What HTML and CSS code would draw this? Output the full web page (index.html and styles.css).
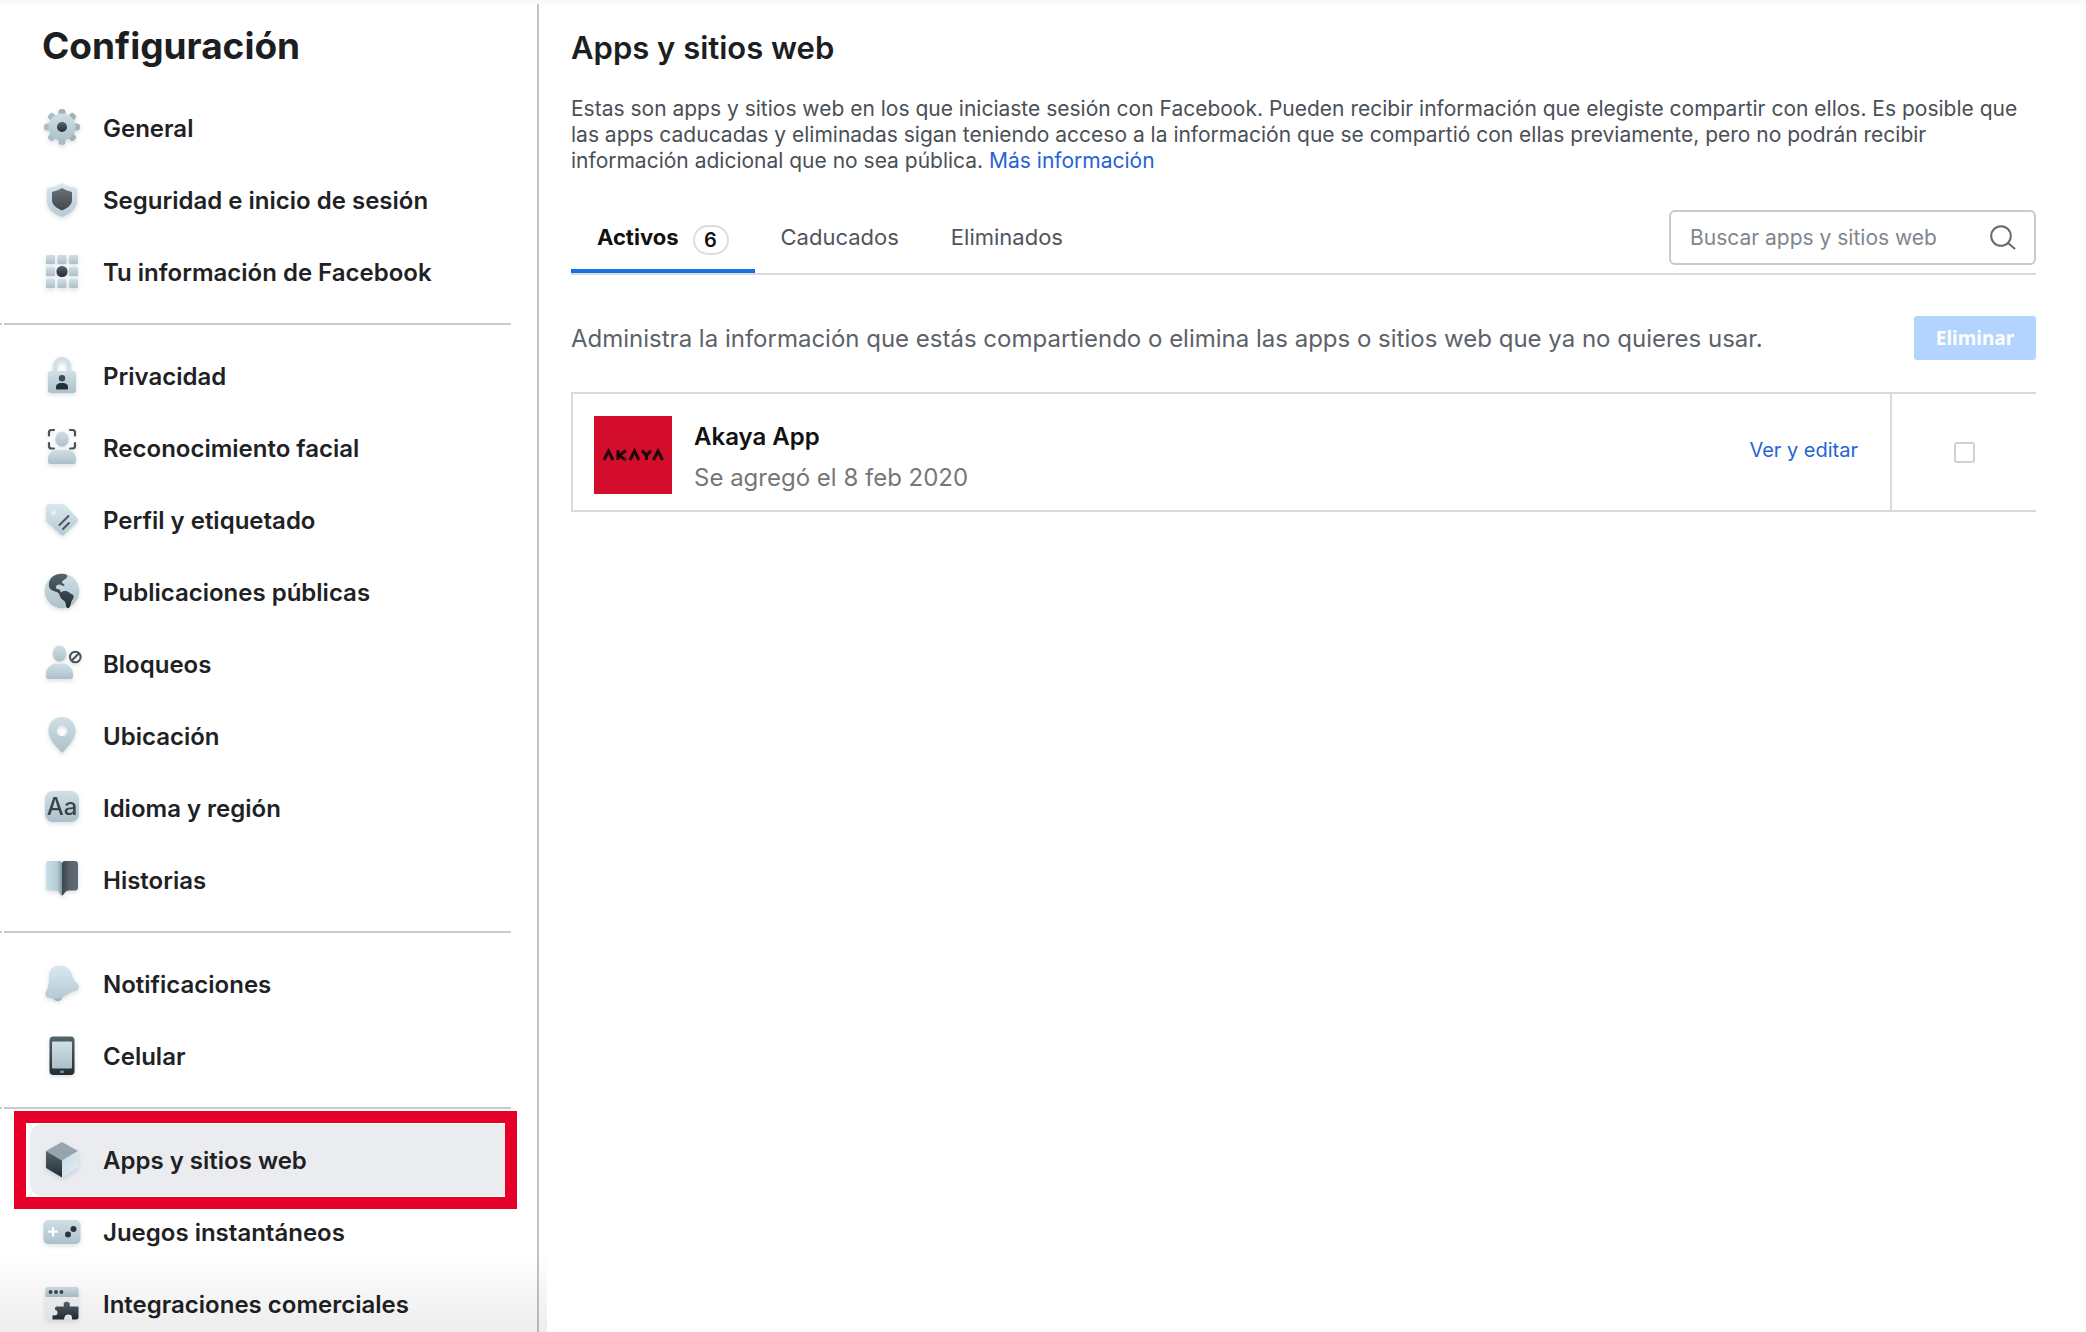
FILE: index.html
```html
<!DOCTYPE html>
<html lang="es">
<head>
<meta charset="utf-8">
<meta name="viewport" content="width=device-width, initial-scale=1">
<title>Configuración - Apps y sitios web</title>
<link rel="stylesheet" href="styles.css">
</head>
<body>
<svg class="defs" aria-hidden="true">
  <defs>
    <linearGradient id="light" x1="0" y1="0" x2="0" y2="1"><stop offset="0" stop-color="#cfe0e6"/><stop offset="1" stop-color="#adc0ca"/></linearGradient>
    <linearGradient id="pale" x1="0" y1="0" x2="0" y2="1"><stop offset="0" stop-color="#d8e8ef"/><stop offset="1" stop-color="#b6cad4"/></linearGradient>
    <linearGradient id="dark" x1="0" y1="0" x2="0" y2="1"><stop offset="0" stop-color="#56646c"/><stop offset="1" stop-color="#232c33"/></linearGradient>
    <linearGradient id="slate" x1="0" y1="0" x2="0" y2="1"><stop offset="0" stop-color="#6b6f76"/><stop offset="1" stop-color="#42464d"/></linearGradient>
    <linearGradient id="teeth" x1="0" y1="0" x2="0" y2="1"><stop offset="0" stop-color="#9fb2b9"/><stop offset="1" stop-color="#a9bec9"/></linearGradient>
    <linearGradient id="pageLeft"><stop offset="0" stop-color="#c9dfe9"/><stop offset=".7" stop-color="#b4ccd7"/><stop offset="1" stop-color="#8199a3"/></linearGradient>
    <linearGradient id="pageRight"><stop offset="0" stop-color="#3c454c"/><stop offset=".5" stop-color="#5a636b"/><stop offset="1" stop-color="#626b73"/></linearGradient>
    <linearGradient id="cubeRight" x1="0" y1="0" x2="1" y2="1"><stop offset="0" stop-color="#c3d8e2"/><stop offset="1" stop-color="#e6f1f5"/></linearGradient>
  </defs>
</svg>
<div class="page">
  <aside class="sidebar">
    <h2 class="sidebar-title">Configuración</h2>
    <nav aria-label="Configuración">
      <ul class="menu">
        <li><a class="item" href="#general">
          <svg class="icon" viewBox="0 0 36 40"><g fill="url(#teeth)"><rect x="14.500" y="1" width="7" height="36" rx="3"/><rect x="14.500" y="1" width="7" height="36" rx="3" transform="rotate(45 18 19)"/><rect x="14.500" y="1" width="7" height="36" rx="3" transform="rotate(90 18 19)"/><rect x="14.500" y="1" width="7" height="36" rx="3" transform="rotate(135 18 19)"/></g><circle cx="18" cy="19" r="13.500" fill="url(#light)"/><circle cx="18" cy="19" r="5" fill="url(#dark)"/></svg>
          General</a></li>
        <li><a class="item" href="#seguridad">
          <svg class="icon" viewBox="0 0 36 40"><path fill="url(#pale)" d="M18 3c4 2.500 9 4 12.500 4.500 1.500.2 2.500 1 2.500 2.500v11c0 8-7 13-15 16C10 34 3 29 3 21V10c0-1.500 1-2.300 2.500-2.500C9 7 14 5.500 18 3z"/><path fill="url(#slate)" d="M18 8c3 2 6 3 8.500 3.400 1 .2 1.500.7 1.500 1.600V20c0 5-4.500 8-10 10.500C12.500 28 8 25 8 20v-7c0-.9.500-1.400 1.500-1.600C12 11 15 10 18 8z"/></svg>
          Seguridad e inicio de sesión</a></li>
        <li><a class="item" href="#informacion">
          <svg class="icon" viewBox="0 0 36 40"><g fill="url(#light)"><rect x="2" y="3" width="9" height="9" rx="1"/><rect x="13.500" y="3" width="9" height="9" rx="1"/><rect x="25" y="3" width="9" height="9" rx="1"/><rect x="2" y="15" width="9" height="9" rx="1"/><rect x="13.500" y="15" width="9" height="9" rx="1"/><rect x="25" y="15" width="9" height="9" rx="1"/><rect x="2" y="27" width="9" height="9" rx="1"/><rect x="13.500" y="27" width="9" height="9" rx="1"/><rect x="25" y="27" width="9" height="9" rx="1"/></g><circle cx="18" cy="19.500" r="5.600" fill="url(#dark)"/></svg>
          Tu información de Facebook</a></li>
      </ul>
      <hr class="rule">
      <ul class="menu">
        <li><a class="item" href="#privacidad">
          <svg class="icon" viewBox="0 0 36 40"><path fill="none" stroke="#cfe0e7" stroke-width="4.500" d="M11 17v-6.500a7 7.500 0 0 1 14 0V17"/><rect x="4" y="15" width="28" height="22" rx="3" fill="url(#light)"/><circle cx="18" cy="22.300" r="3.200" fill="#3f4b52"/><path fill="#252e35" d="M12 31c0-3 2.500-4 6-4s6 1 6 4v1.500c0 .6-.4 1-1 1H13c-.6 0-1-.4-1-1z"/></svg>
          Privacidad</a></li>
        <li><a class="item" href="#facial">
          <svg class="icon" viewBox="0 0 36 40"><ellipse cx="18" cy="11" rx="6.700" ry="7.500" fill="url(#light)"/><path fill="url(#light)" d="M4 31c0-6 5-9.500 10-9.500 2 1 6 1 8 0 5 0 10 3.500 10 9.500v2.500c0 1.500-1 2.500-2.500 2.500h-23C5 36 4 35 4 33.500z"/><path fill="none" stroke="#4a5359" stroke-width="2.200" stroke-linecap="round" d="M5 7.500V4.500Q5 2 7.500 2H10M26 2h2.500Q31 2 31 4.500v3M31 15v3q0 2.500-2.500 2.500H26M10 20.500H7.500Q5 20.500 5 18v-3"/></svg>
          Reconocimiento facial</a></li>
        <li><a class="item" href="#perfil">
          <svg class="icon" viewBox="0 0 36 40"><path fill="url(#pale)" fill-rule="evenodd" d="M5 4h13c1.500 0 2.500.5 3.500 1.500L33 18c1.200 1.300 1.200 2.700 0 4L20.500 34.500c-1.200 1.200-2.800 1.200-4 0L3.500 22.500C2.500 21.500 2 20.500 2 19V7c0-2 1-3 3-3zM9.500 9.500a2.600 2.600 0 1 0 .01 0z"/><path stroke="#4b565d" stroke-width="2" stroke-linecap="round" d="m15.500 25 9-9M19 29l6-6"/></svg>
          Perfil y etiquetado</a></li>
        <li><a class="item" href="#publicaciones">
          <svg class="icon" viewBox="0 0 36 40"><circle cx="18" cy="19" r="17.300" fill="url(#light)"/><path fill="url(#dark)" d="M17 1.800c3-.3 6.500.4 6.300 2.700-.2 2.500-4.300 3-5.300 5.500-.5 1.500 2.500 1.500 2.500 3.500-1.500 1.500-3-1-5-1-2.500 0-4 1.500-3.500 3.500.5 1.500 3 .8 4 2 .8 1 0 2 1 2.500 2-1.500 4.500-1.800 6.500-1 2 .8 3 2.500 5 3 2 .7 1 4-.5 6-1.500 2.300-1 6-3.500 7.800-2.500 0-2.500-3-3-5.500-.5-2-3-2.300-4.500-4.500-1-1.500-1.500-4-2.500-5.300C12.500 19.500 7 19 5.500 16 4 12 5.500 7.500 8.500 4.800 11 2.800 14 2 17 1.800z"/></svg>
          Publicaciones públicas</a></li>
        <li><a class="item" href="#bloqueos">
          <svg class="icon" viewBox="0 0 36 40"><ellipse cx="15.500" cy="9.500" rx="6.700" ry="8" fill="url(#light)"/><path fill="url(#light)" d="M2 30c0-6 5-10 9.500-10.500 2.500 1 5.500 1 8 0C24 20 29 24 29 30v2.500c0 1.500-1 2.500-2.500 2.500h-22C3 35 2 34 2 32.500z"/><circle cx="31.300" cy="13" r="5.300" fill="#f4f6f7" stroke="#4a5055" stroke-width="2"/><path stroke="#4a5055" stroke-width="2" d="m27.800 16.500 7-7"/></svg>
          Bloqueos</a></li>
        <li><a class="item" href="#ubicacion">
          <svg class="icon" viewBox="0 0 36 40"><path fill="url(#light)" fill-rule="evenodd" d="M18 1c8 0 13.500 6 13.500 13.500C31.500 24 24 30 18.800 36.300q-.8.800-1.600 0C12 30 4.500 24 4.500 14.500 4.500 7 10 1 18 1zm0 8.500a5.300 5.300 0 1 0 .01 0z"/></svg>
          Ubicación</a></li>
        <li><a class="item" href="#idioma">
          <svg class="icon" viewBox="0 0 36 40"><rect x="1" y="3" width="34" height="31" rx="8" fill="url(#light)"/><text class="icon-letters" x="18" y="27" text-anchor="middle">Aa</text></svg>
          Idioma y región</a></li>
        <li><a class="item" href="#historias">
          <svg class="icon" viewBox="0 0 36 40"><path fill="url(#pageLeft)" d="M5 1h10q3 0 3 3v31.500q-1 0-2.500-2.500-1.500-2.500-4-2.500H5q-3 0-3-3V4q0-3 3-3z"/><path fill="url(#pageRight)" d="M31 1H21q-3 0-3 3v31.500q1 0 2.500-2.500 1.500-2.500 4-2.500H31q3 0 3-3V4q0-3-3-3z"/></svg>
          Historias</a></li>
      </ul>
      <hr class="rule">
      <ul class="menu">
        <li><a class="item" href="#notificaciones">
          <svg class="icon" viewBox="0 0 36 40"><path fill="#9fb4bf" d="M9 32h9.500c0 3-2 5.200-4.800 5.200S9 35 9 32z"/><path fill="url(#pale)" d="M5 12C5 5.500 9.500 1.500 15.500 1.500c6.500 0 11 3.500 12.500 9.500 1 4 3 6 5.500 8.500 2.500 3 1.500 6-1.500 7-5 1.500-9 4.500-13 6.500-4 1.800-10 2.300-15 .5-3-1-3.500-4-1.500-7 2-3.500 2.500-8.500 2.500-14.500z"/></svg>
          Notificaciones</a></li>
        <li><a class="item" href="#celular">
          <svg class="icon" viewBox="0 0 36 40"><rect x="5.500" y=".5" width="25" height="38.500" rx="4" fill="url(#dark)"/><rect x="8" y="5.500" width="20" height="27" rx="1" fill="url(#light)"/><rect x="16" y="34.500" width="4" height="2.500" rx="1" fill="#7d8a92"/></svg>
          Celular</a></li>
      </ul>
      <hr class="rule">
      <ul class="menu">
        <li><a class="item item-active" href="#apps" aria-current="page">
          <svg class="icon" viewBox="0 0 36 40"><path fill="#95a4ae" d="m18 2 16 9-16 9.500L2 11z"/><path fill="url(#dark)" d="m2 11 16 9.500V37.500L2 28z"/><path fill="url(#cubeRight)" d="m34 11-16 9.500V37.500L34 28z"/></svg>
          Apps y sitios web</a></li>
        <li><a class="item" href="#juegos">
          <svg class="icon" viewBox="0 0 36 40"><rect x="-.5" y="8" width="37" height="24" rx="5" fill="url(#light)"/><path stroke="#fff" stroke-width="2.200" d="M9 15v9.500M4.200 19.700h9.600"/><circle cx="24" cy="22.500" r="3" fill="#2c363d"/><circle cx="29.500" cy="17" r="3" fill="#2c363d"/></svg>
          Juegos instantáneos</a></li>
        <li><a class="item" href="#integraciones">
          <svg class="icon" viewBox="0 0 36 40"><rect x="1.500" y="12" width="33" height="23.500" rx="3" fill="#f1f3f4"/><path fill="url(#light)" d="M4 3h28q2.500 0 2.500 2.500V13h-33V5.500Q1.500 3 4 3z"/><g fill="#3b474e"><circle cx="6.500" cy="8" r="1.900"/><circle cx="12" cy="8" r="1.900"/><circle cx="17.500" cy="8" r="1.900"/></g><path fill="url(#dark)" d="M12 22.500h7.500c1-.8-.3-2 .2-3.200 1-2 5.200-2 6 0 .5 1.200-.7 2.400.3 3.200h8.500V33q0 2.500-2.500 2.500h-4c0-2 .5-5-3.500-5s-4 3-4.500 5H8.500v-4c1-.5 2.500.3 4-.5 1.500-1.200 1.300-4-.2-4.800-1-.5-1.300 0-1.300-.7-.3-1.500.2-2 1-3z"/></svg>
          Integraciones comerciales</a></li>
      </ul>
    </nav>
  </aside>

  <main class="content">
    <h1 class="heading">Apps y sitios web</h1>
    <p class="intro">Estas son apps y sitios web en los que iniciaste sesión con Facebook. Pueden recibir información que elegiste compartir con ellos. Es posible que las apps caducadas y eliminadas sigan teniendo acceso a la información que se compartió con ellas previamente, pero no podrán recibir información adicional que no sea pública. <a class="link" href="#mas">Más información</a></p>

    <div class="toolbar">
      <div class="tabs" role="tablist">
        <button class="tab tab-active" type="button" role="tab" aria-selected="true">Activos <span class="badge">6</span></button>
        <button class="tab" type="button" role="tab" aria-selected="false">Caducados</button>
        <button class="tab" type="button" role="tab" aria-selected="false">Eliminados</button>
      </div>
      <label class="search">
        <input class="search-input" type="search" placeholder="Buscar apps y sitios web" aria-label="Buscar apps y sitios web">
        <svg class="search-icon" viewBox="0 0 26 26"><circle cx="11" cy="11" r="9.800"/><path d="m18 18 6.500 5.500"/></svg>
      </label>
    </div>

    <div class="actions">
      <p class="actions-text">Administra la información que estás compartiendo o elimina las apps o sitios web que ya no quieres usar.</p>
      <button class="remove" type="button">Eliminar</button>
    </div>

    <ul class="apps">
      <li class="app">
        <div class="app-main">
          <svg class="app-logo" viewBox="0 0 78 78" role="img" aria-label="Akaya"><rect width="78" height="78" fill="#d50d2d"/><g fill="none" stroke="#1c0508" stroke-width="3"><path d="m10 44 4.500-9 4.500 9M24 34v10M32 34.500l-7 5 7 4.500M36 44l4.500-9 4.500 9M48 34.500l4.500 5 4.500-5M52.500 39v5M59.500 44l4.500-9 4.500 9"/></g></svg>
          <div class="app-info">
            <div class="app-name" id="akaya">Akaya App</div>
            <div class="app-date">Se agregó el 8 feb 2020</div>
          </div>
          <a class="link app-edit" href="#akaya">Ver y editar</a>
        </div>
        <div class="app-select"><input class="check" type="checkbox" aria-labelledby="akaya"></div>
      </li>
    </ul>
  </main>
</div>
</body>
</html>
```

FILE: styles.css
```css
* { box-sizing: border-box; }

body {
  margin: 0;
  background: #fff;
  color: #1c1e21;
  font-family: Inter, "Liberation Sans", sans-serif;
}

ul { margin: 0; padding: 0; list-style: none; }
a { text-decoration: none; }
button { font-family: inherit; }

.defs { position: absolute; width: 0; height: 0; }

.page {
  display: flex;
  align-items: flex-start;
  border-top: 4px solid #fafafa;
}

/* Sidebar */
.sidebar {
  position: sticky;
  top: 0;
  flex: none;
  width: 539px;
  height: calc(100vh - 4px);
  padding-top: 19px;
  overflow-y: auto;
  scrollbar-width: none;
  border-right: 2px solid #c4c4c4;
}

/* Shade over the cut-off end of the menu */
.page::after {
  content: "";
  position: fixed;
  left: 0;
  bottom: 0;
  width: 547px;
  height: 80px;
  background: linear-gradient(rgba(0, 0, 0, 0), rgba(0, 0, 0, .07));
  pointer-events: none;
}

.sidebar-title {
  margin: 0 0 24px 42px;
  font-size: 37px;
  line-height: 45px;
  font-weight: 700;
}

.menu { padding: 0 26px 0 30px; }

.item {
  position: relative;
  display: flex;
  align-items: center;
  gap: 23px;
  height: 72px;
  padding-left: 14px;
  border-radius: 12px;
  color: #1f2225;
  font-size: 24px;
  font-weight: 600;
}

.item-active { background: #ebecf0; }

/* Red frame round the current entry */
.item-active::after {
  content: "";
  position: absolute;
  inset: -13px -6px -13px -16px;
  border: 12px solid #e50027;
}

.icon {
  flex: none;
  width: 36px;
  height: 40px;
  overflow: visible;
  filter: drop-shadow(0 2px 2px rgba(60, 80, 95, .18));
}

.icon-letters {
  font-size: 24px;
  font-weight: 500;
  fill: #37444c;
}

.rule {
  height: 2px;
  margin: 15px 26px 15px 0;
  border: 0;
  background: linear-gradient(90deg, #c9cacb 2px, transparent 2px 4px, #c9cacb 4px);
}

/* Content */
.content {
  flex: 1;
  min-width: 0;
  padding: 24px 50px 40px 32px;
}

.heading {
  margin: 0 0 28px;
  font-size: 31px;
  line-height: 40px;
  font-weight: 600;
}

.intro {
  margin: 0;
  color: #4b4f56;
  font-size: 21px;
  line-height: 26px;
}

.link { color: #2463d6; }

.toolbar {
  display: flex;
  justify-content: space-between;
  align-items: flex-start;
  margin-top: 36px;
  border-bottom: 2px solid #dadbde;
}

.tabs { display: flex; }

.tab {
  display: flex;
  align-items: center;
  gap: 14px;
  padding: 0 26px 5px;
  border: 0;
  border-bottom: 4px solid transparent;
  background: none;
  color: #50555c;
  font-size: 22px;
  line-height: 54px;
}

.tab-active {
  border-bottom-color: #1b70e0;
  color: #111;
  font-weight: 700;
}

.badge {
  width: 36px;
  height: 30px;
  margin-top: 6px;
  border: 2px solid #dcdddf;
  border-radius: 15px;
  font-size: 20px;
  line-height: 26px;
  font-weight: 600;
  text-align: center;
}

.search {
  display: flex;
  align-items: center;
  width: 367px;
  height: 55px;
  padding: 0 18px 0 19px;
  border: 2px solid #c8cacc;
  border-radius: 6px;
}

.search-input {
  flex: 1;
  min-width: 0;
  padding: 0;
  border: 0;
  outline: 0;
  background: none;
  color: #1c1e21;
  font: 21px Inter, "Liberation Sans", sans-serif;
  appearance: none;
}

.search-input::placeholder { color: #80868e; opacity: 1; }

.search-icon {
  width: 26px;
  height: 26px;
  fill: none;
  stroke: #666a6e;
  stroke-width: 2;
  stroke-linecap: round;
}

.actions {
  display: flex;
  justify-content: space-between;
  align-items: center;
  margin: 41px 0 32px;
}

.actions-text {
  margin: 0;
  color: #5c6269;
  font-size: 24px;
}

.remove {
  width: 122px;
  height: 44px;
  padding: 0;
  border: 0;
  border-radius: 3px;
  background: #b2d4ff;
  color: #fff;
  font-family: "Noto Sans", sans-serif;
  font-size: 19px;
  font-weight: 700;
}

.apps { border-top: 2px solid #dadada; }

.app {
  display: flex;
  border-bottom: 2px solid #dadada;
}

.app-main {
  display: flex;
  flex: 1;
  align-items: flex-start;
  padding: 22px 32px 12px 21px;
  border: solid #dadada;
  border-width: 0 2px;
}

.app-logo { width: 78px; height: 78px; }

.app-info {
  flex: 1;
  padding-left: 22px;
  font-size: 24px;
  line-height: 41px;
}

.app-name { color: #111; font-weight: 600; }
.app-date { color: #777; }

.app-edit { font-size: 20px; line-height: 68px; }

.app-select {
  display: flex;
  align-items: center;
  justify-content: center;
  width: 144px;
}

.check {
  width: 21px;
  height: 21px;
  margin: 0;
  border: 2px solid #d0d1d3;
  border-radius: 3px;
  background: #fff;
  appearance: none;
}

.check:checked { background: #1b70e0; border-color: #1b70e0; }
```
